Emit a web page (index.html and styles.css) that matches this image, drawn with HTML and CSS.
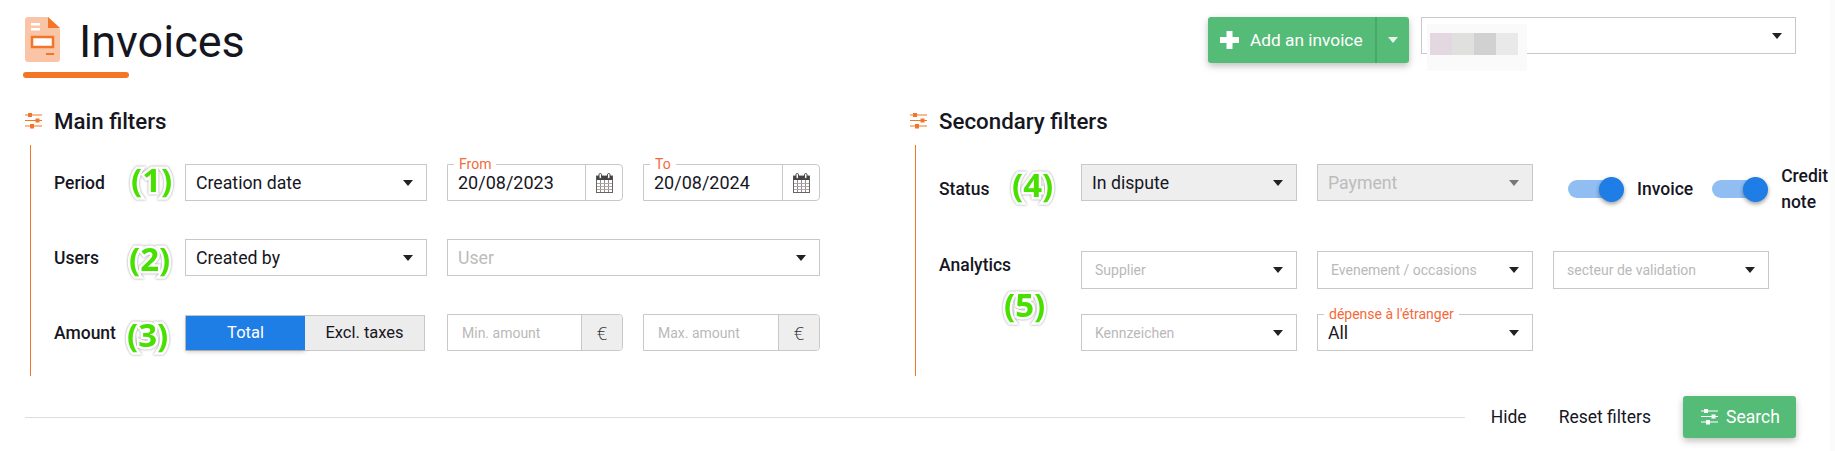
FILE: index.html
```html
<!DOCTYPE html>
<html lang="en">
<head>
    <meta charset="UTF-8">
    <title>Invoices</title>
    <link rel="stylesheet" href="styles.css">
</head>
<body>

    <svg class="defs">
        <symbol id="sliders" viewBox="0 0 17 16">
            <path d="M0 2h17M0 7.500h17M0 13h17" stroke="currentColor" stroke-width="1.200" fill="none"/>
            <rect x="3" y="0" width="4" height="4"/>
            <rect x="10.500" y="5.500" width="4" height="4"/>
            <rect x="5" y="11" width="4" height="4.500"/>
        </symbol>
        <symbol id="calendar" viewBox="0 0 17 20">
            <rect x="0.500" y="3" width="16" height="16.500" fill="#fff" stroke="#666"/>
            <rect x="0.500" y="3" width="16" height="4" fill="#444"/>
            <rect x="3" y="0.500" width="2.500" height="5" rx="1.200" fill="#fff" stroke="#444"/>
            <rect x="11.500" y="0.500" width="2.500" height="5" rx="1.200" fill="#fff" stroke="#444"/>
            <path d="M4.500 7v12M8.500 7v12M12.500 7v12" stroke="#8d86a8"/>
            <path d="M1 10.500h15M1 13.500h15M1 16.500h15" stroke="#b3a794"/>
        </symbol>
    </svg>

    <header class="top">
        <div class="title-block">
            <div class="title-row">
                <svg class="doc-icon" width="35" height="45" viewBox="0 0 35 45">
                    <path d="M3 0h20l12 12v30a3 3 0 0 1-3 3H3a3 3 0 0 1-3-3V3a3 3 0 0 1 3-3z" fill="#fac5a6"/>
                    <path d="M23 0l12 11H23z" fill="#f47528"/>
                    <rect x="6" y="6" width="9" height="2.500" fill="#fff"/>
                    <rect x="6" y="11" width="9" height="2.500" fill="#fff"/>
                    <rect x="7" y="20" width="21" height="10" fill="#fff" stroke="#f47528" stroke-width="2.500"/>
                    <rect x="21" y="36" width="8" height="2" fill="#f47528"/>
                </svg>
                <h1>Invoices</h1>
            </div>
            <div class="title-bar"></div>
        </div>
        <div class="top-actions">
            <div class="add-btn">
                <span class="add-main">
                    <svg width="19" height="18" viewBox="0 0 19 18"><path d="M6.500 0h6v6h6.500v6h-6.500v6h-6v-6H0V6h6.500z" fill="#fff"/></svg>
                    Add an invoice
                </span>
                <span class="add-more"><i class="caret caret-white"></i></span>
            </div>
            <div class="select company-select">
                <div class="blur-patch">
                    <b class="b1"></b><b class="b2"></b><b class="b3"></b><b class="b4"></b>
                </div>
                <i class="caret"></i>
            </div>
        </div>
    </header>

    <main class="filters">
        <section>
            <h2><svg class="sliders"><use href="#sliders"/></svg>Main filters</h2>
            <div class="panel panel-main">
                <label class="row-label">Period</label>
                <div class="select"><span>Creation date</span><i class="caret"></i></div>
                <div class="field">
                    <em class="legend">From</em>
                    <span class="value">20/08/2023</span>
                    <span class="cal"><svg width="17" height="20"><use href="#calendar"/></svg></span>
                </div>
                <div class="field">
                    <em class="legend">To</em>
                    <span class="value">20/08/2024</span>
                    <span class="cal"><svg width="17" height="20"><use href="#calendar"/></svg></span>
                </div>

                <label class="row-label">Users</label>
                <div class="select"><span>Created by</span><i class="caret"></i></div>
                <div class="select span-2"><span class="ph">User</span><i class="caret"></i></div>

                <label class="row-label">Amount</label>
                <div class="segment">
                    <span class="seg-on">Total</span>
                    <span class="seg-off">Excl. taxes</span>
                </div>
                <div class="field">
                    <span class="amount-ph">Min. amount</span>
                    <span class="euro">€</span>
                </div>
                <div class="field">
                    <span class="amount-ph">Max. amount</span>
                    <span class="euro">€</span>
                </div>

                <span class="mark m1">(1)</span>
                <span class="mark m2">(2)</span>
                <span class="mark m3">(3)</span>
            </div>
        </section>

        <section>
            <h2><svg class="sliders"><use href="#sliders"/></svg>Secondary filters</h2>
            <div class="panel panel-second">
                <div class="grid-second status-row">
                    <label class="row-label status-label">Status</label>
                    <div class="select filled"><span>In dispute</span><i class="caret"></i></div>
                    <div class="select filled"><span class="ph">Payment</span><i class="caret caret-grey"></i></div>
                    <div class="toggles">
                        <span class="toggle"><i></i></span>
                        <label class="toggle-label">Invoice</label>
                        <span class="toggle"><i></i></span>
                        <label class="toggle-label wrap">Credit note</label>
                    </div>
                </div>
                <div class="grid-second analytics-row">
                    <label class="row-label analytics-label">Analytics</label>
                    <div class="select tall"><span class="ph-small">Supplier</span><i class="caret"></i></div>
                    <div class="select tall"><span class="ph-small">Evenement / occasions</span><i class="caret"></i></div>
                    <div class="select tall"><span class="ph-small">secteur de validation</span><i class="caret"></i></div>
                    <div class="select"><span class="ph-small">Kennzeichen</span><i class="caret"></i></div>
                    <div class="select">
                        <em class="legend">dépense à l'étranger</em>
                        <span>All</span><i class="caret"></i>
                    </div>
                </div>

                <span class="mark m4">(4)</span>
                <span class="mark m5">(5)</span>
            </div>
        </section>
    </main>

    <footer class="bottom">
        <div class="rule"></div>
        <a class="link hide-link">Hide</a>
        <a class="link">Reset filters</a>
        <button class="search-btn"><svg class="sliders"><use href="#sliders"/></svg>Search</button>
    </footer>

</body>
</html>
```

FILE: styles.css
```css
* {
    box-sizing: border-box;
}

body {
    margin: 0;
    height: 451px;
    overflow: hidden;
    background: #fff;
    border-right: 5px solid #fbfbfb;
    color: #16161f;
    font-family: Roboto, sans-serif;
    font-size: 17.700px;
}

.defs {
    display: none;
}

/* top */
.top {
    display: flex;
    justify-content: space-between;
    height: 78px;
    padding: 0 34px 0 23px;
}

.title-block {
    padding-top: 17px;
}

.title-row {
    display: flex;
    align-items: center;
    height: 45px;
    padding-left: 2px;
}

.doc-icon {
    margin-right: 19px;
}

h1 {
    margin: 4px 0 0;
    font-size: 45px;
    font-weight: 400;
}

.title-bar {
    width: 106px;
    height: 6px;
    margin-top: 10px;
    background: #f47528;
    border-radius: 3px;
}

.top-actions {
    display: flex;
    gap: 12px;
    padding-top: 17px;
}

.add-btn {
    display: flex;
    width: 201px;
    height: 46px;
    color: #fff;
    background: #55bc78;
    border-radius: 3px;
    box-shadow: 0 3px 7px rgba(0, 0, 0, 0.25);
    font-size: 17.300px;
}

.add-main {
    display: flex;
    flex: 1;
    align-items: center;
    gap: 11px;
    padding-left: 12px;
}

.add-more {
    display: flex;
    align-items: center;
    justify-content: center;
    width: 34px;
    border-left: 2px solid #4aa96a;
}

.company-select {
    width: 375px;
    height: 46px;
}

.blur-patch {
    position: absolute;
    left: 5px;
    top: 6px;
    display: flex;
    width: 100px;
    height: 47px;
    padding: 9px 9px 16px 3px;
    background: #fafafa;
}

.blur-patch b {
    width: 22px;
}

.b1 { background: #e3d8df; }
.b2 { background: #e0e0de; }
.b3 { background: #d0d1d0; }
.b4 { background: #e9e9e9; }

/* filter sections */
.filters {
    display: grid;
    grid-template-columns: 885px 1fr;
    margin-top: 26px;
    padding-left: 25px;
}

h2 {
    display: flex;
    align-items: center;
    height: 34px;
    margin: 0 0 7px;
    font-size: 22.300px;
    font-weight: 500;
}

.sliders {
    width: 17px;
    height: 16px;
    margin-right: 12px;
    fill: #f47528;
    color: #f47528;
}

.panel {
    position: relative;
    height: 231px;
    margin-left: 5px;
    padding-top: 19px;
    border-left: 1px solid #f47528;
}

.panel-main {
    display: grid;
    grid-template-columns: 111px 242px 176px 177px;
    grid-auto-rows: 37px;
    gap: 38px 20px;
    align-items: center;
    padding-left: 23px;
}

.panel-second {
    padding-left: 23px;
}

.grid-second {
    display: grid;
    grid-template-columns: 122px 216px 216px 1fr;
    column-gap: 20px;
}

.status-row {
    margin-bottom: 36px;
}

.analytics-row {
    grid-template-columns: 122px 216px 216px 216px;
    grid-template-rows: 38px 37px;
    row-gap: 25px;
}

.row-label {
    font-size: 17.500px;
    font-weight: 500;
    white-space: nowrap;
}

.status-label {
    align-self: center;
    margin-top: -1px;
}

.analytics-label {
    grid-row: span 2;
    margin-top: 1px;
    line-height: 26px;
}

/* inputs */
.select,
.field {
    position: relative;
    display: flex;
    align-items: center;
    height: 37px;
    border: 1px solid #c8c8c8;
    background: #fff;
}

.select {
    justify-content: space-between;
    padding: 0 13px 0 10px;
}

.select.tall {
    height: 38px;
}

.select.filled {
    background: #eee;
}

.span-2 {
    grid-column: span 2;
}

.ph {
    color: #bcbcbc;
}

.ph-small {
    padding-left: 3px;
    color: #b9b9b9;
    font-size: 14px;
}

.caret {
    width: 0;
    height: 0;
    border-style: solid;
    border-width: 6px 5px 0;
    border-color: #222 transparent transparent;
}

.caret-white {
    border-top-color: #e6f5eb;
}

.caret-grey {
    border-top-color: #777;
}

.company-select .caret {
    margin-left: auto;
}

.field {
    border-radius: 0 4px 4px 0;
}

.field .value {
    flex: 1;
    padding-left: 10px;
    font-size: 18px;
}

.amount-ph {
    flex: 1;
    padding-left: 14px;
    color: #b9b9b9;
    font-size: 14px;
}

.cal {
    display: flex;
    align-items: center;
    justify-content: center;
    width: 37px;
    height: 100%;
    border-left: 1px solid #c8c8c8;
}

.euro {
    display: flex;
    align-items: center;
    justify-content: center;
    width: 41px;
    height: 100%;
    background: #eee;
    border-left: 1px solid #c8c8c8;
    border-radius: 0 4px 4px 0;
    color: #333;
    font-family: "Open Sans", sans-serif;
    font-size: 18px;
    font-weight: 300;
}

.legend {
    position: absolute;
    left: 6px;
    top: -9px;
    padding: 0 5px;
    background: #fff;
    color: #f4693a;
    font-size: 14px;
    font-style: normal;
    line-height: 16px;
}

.segment {
    display: flex;
    width: 240px;
    height: 36px;
    border: 1px solid #c8c8c8;
    font-size: 16.500px;
    text-align: center;
    line-height: 34px;
}

.seg-on {
    flex: 1;
    color: #fff;
    background: #1f7de6;
    box-shadow: 0 2px 4px rgba(0, 0, 0, 0.2);
}

.seg-off {
    flex: 1;
    background: #ececec;
}

/* toggles */
.toggles {
    display: flex;
    align-items: center;
    height: 52px;
    margin: -1px 0 0 15px;
}

.toggle {
    position: relative;
    flex: none;
    width: 52px;
    height: 18px;
    margin-right: 17px;
    background: #90bef2;
    border-radius: 9px;
}

.toggle i {
    position: absolute;
    right: -4px;
    top: -3.500px;
    width: 25px;
    height: 25px;
    background: #1f7de6;
    border-radius: 50%;
    box-shadow: 0 2px 4px rgba(0, 0, 0, 0.4);
}

.toggle-label {
    margin-right: 19px;
    font-size: 17.500px;
    font-weight: 500;
}

.toggle-label.wrap {
    width: 49px;
    margin-right: 0;
    line-height: 26px;
}

/* numbers laid over the screenshot */
.mark {
    position: absolute;
    color: #47e000;
    font-family: "Open Sans", sans-serif;
    font-size: 33px;
    font-weight: 700;
    line-height: 36px;
    -webkit-text-stroke: 5px #fff;
    paint-order: stroke fill;
    filter: drop-shadow(0 0 1px #999);
    clip-path: inset(1px -6px -6px -6px);
}

.m1 { left: 100px; top: 17px; }
.m2 { left: 98px; top: 96px; }
.m3 { left: 96px; top: 172px; }
.m4 { left: 96px; top: 22px; }
.m5 { left: 88px; top: 142px; }

/* bottom */
.bottom {
    display: flex;
    align-items: center;
    width: 1771px;
    height: 42px;
    margin-top: 20px;
    margin-left: 25px;
}

.rule {
    flex: 1;
    height: 1px;
    background: #ddd;
}

.link {
    margin-right: 32px;
    font-size: 17.500px;
}

.hide-link {
    margin-left: 26px;
}

.search-btn {
    display: flex;
    align-items: center;
    justify-content: center;
    width: 113px;
    height: 42px;
    padding: 0 0 0 2px;
    color: #fff;
    background: #55bc78;
    border: 0;
    border-radius: 3px;
    box-shadow: 0 3px 7px rgba(0, 0, 0, 0.25);
    font-family: inherit;
    font-size: 17.500px;
}

.search-btn .sliders {
    margin-right: 8px;
    fill: #fff;
    color: #fff;
}
```
